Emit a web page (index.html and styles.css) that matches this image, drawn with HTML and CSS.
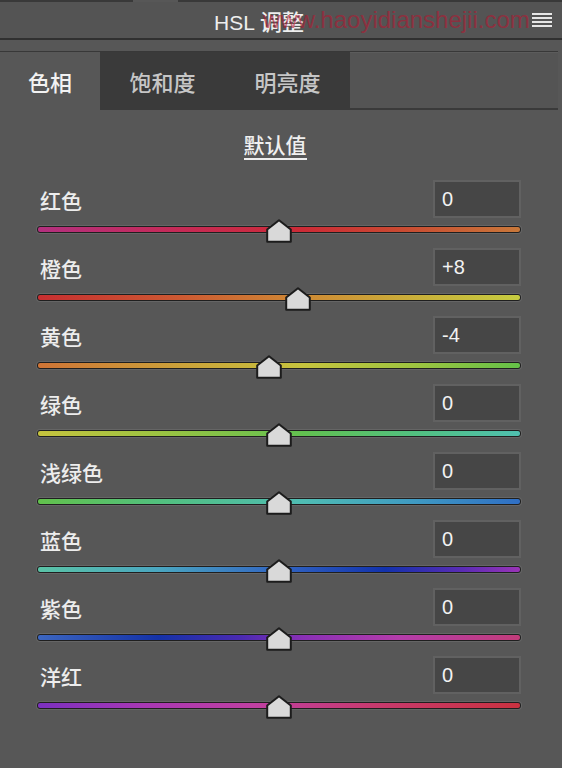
FILE: index.html
```html
<!DOCTYPE html>
<html lang="zh">
<head>
<meta charset="utf-8">
<title>HSL 调整</title>
<link rel="stylesheet" href="styles.css">
</head>
<body>
<div class="panel">
  <div class="topstrip"><span class="seg-a"></span><span class="seg-gap"></span><span class="seg-b"></span></div>
  <div class="header">
    <span class="title">HSL <span class="title-cjk">调整</span></span>
    <span class="watermark">www.haoyidianshejii.com</span>
    <svg class="menu-icon" width="20" height="15" viewBox="0 0 20 15">
      <rect x="0" y="0" width="20" height="2" fill="#e6e6e6"/>
      <rect x="0" y="4" width="20" height="2" fill="#e6e6e6"/>
      <rect x="0" y="8" width="20" height="2" fill="#e6e6e6"/>
      <rect x="0" y="12" width="20" height="2" fill="#e6e6e6"/>
    </svg>
  </div>
  <div class="divider"></div>
  <div class="tabbar">
    <div class="tab active">色相</div>
    <div class="tab">饱和度</div>
    <div class="tab">明亮度</div>
    <div class="tabfill"></div>
  </div>
  <div class="defaults"><span>默认值</span></div>
  <div class="rows">
    <div class="row">
      <div class="row-top"><span class="label">红色</span><div class="field">0</div></div>
      <div class="slider"><div class="track t-red"></div>
        <svg class="thumb" style="left:50%" width="26" height="24" viewBox="0 0 26 24"><path d="M13 1.2 L24.8 10.5 V22.8 H1.2 V10.5 Z"/></svg></div>
    </div>
    <div class="row">
      <div class="row-top"><span class="label">橙色</span><div class="field">+8</div></div>
      <div class="slider"><div class="track t-orange"></div>
        <svg class="thumb" style="left:54%" width="26" height="24" viewBox="0 0 26 24"><path d="M13 1.2 L24.8 10.5 V22.8 H1.2 V10.5 Z"/></svg></div>
    </div>
    <div class="row">
      <div class="row-top"><span class="label">黄色</span><div class="field">-4</div></div>
      <div class="slider"><div class="track t-yellow"></div>
        <svg class="thumb" style="left:48%" width="26" height="24" viewBox="0 0 26 24"><path d="M13 1.2 L24.8 10.5 V22.8 H1.2 V10.5 Z"/></svg></div>
    </div>
    <div class="row">
      <div class="row-top"><span class="label">绿色</span><div class="field">0</div></div>
      <div class="slider"><div class="track t-green"></div>
        <svg class="thumb" style="left:50%" width="26" height="24" viewBox="0 0 26 24"><path d="M13 1.2 L24.8 10.5 V22.8 H1.2 V10.5 Z"/></svg></div>
    </div>
    <div class="row">
      <div class="row-top"><span class="label">浅绿色</span><div class="field">0</div></div>
      <div class="slider"><div class="track t-aqua"></div>
        <svg class="thumb" style="left:50%" width="26" height="24" viewBox="0 0 26 24"><path d="M13 1.2 L24.8 10.5 V22.8 H1.2 V10.5 Z"/></svg></div>
    </div>
    <div class="row">
      <div class="row-top"><span class="label">蓝色</span><div class="field">0</div></div>
      <div class="slider"><div class="track t-blue"></div>
        <svg class="thumb" style="left:50%" width="26" height="24" viewBox="0 0 26 24"><path d="M13 1.2 L24.8 10.5 V22.8 H1.2 V10.5 Z"/></svg></div>
    </div>
    <div class="row">
      <div class="row-top"><span class="label">紫色</span><div class="field">0</div></div>
      <div class="slider"><div class="track t-purple"></div>
        <svg class="thumb" style="left:50%" width="26" height="24" viewBox="0 0 26 24"><path d="M13 1.2 L24.8 10.5 V22.8 H1.2 V10.5 Z"/></svg></div>
    </div>
    <div class="row">
      <div class="row-top"><span class="label">洋红</span><div class="field">0</div></div>
      <div class="slider"><div class="track t-magenta"></div>
        <svg class="thumb" style="left:50%" width="26" height="24" viewBox="0 0 26 24"><path d="M13 1.2 L24.8 10.5 V22.8 H1.2 V10.5 Z"/></svg></div>
    </div>
  </div>
</div>
</body>
</html>
```
FILE: styles.css
```css
html, body {
  margin: 0;
  padding: 0;
  background: #575757;
}
body {
  width: 562px;
  height: 768px;
  overflow: hidden;
  font-family: "Liberation Sans", "Noto Sans CJK SC", sans-serif;
  color: #ececec;
}
.panel {
  width: 562px;
  height: 768px;
  background: #575757;
  position: relative;
}
.topstrip {
  display: flex;
  height: 2px;
}
.seg-a { width: 133px; background: #393939; }
.seg-gap { width: 45px; }
.seg-b { flex: 1; background: #393939; }

.header {
  position: relative;
  height: 36px;
  background: #545454;
  display: flex;
  align-items: center;
  padding-left: 214px;
  overflow: hidden;
}
.title {
  font-size: 21px;
  color: #eeeeee;
  font-family: "Liberation Sans", "Noto Sans CJK SC", sans-serif;
  line-height: 36px;
  position: relative;
  top: 1px;
  white-space: nowrap;
}
.title-cjk {
  font-family: "Noto Sans CJK SC", sans-serif;
  font-size: 22px;
  font-weight: 500;
}
.watermark {
  position: absolute;
  left: 263px;
  top: 4px;
  font-family: "Liberation Sans", sans-serif;
  font-size: 24px;
  color: rgba(178, 24, 50, 0.6);
  white-space: nowrap;
}
.menu-icon {
  position: absolute;
  right: 10px;
  top: 11px;
}
.divider {
  height: 2px;
  background: #303030;
}
.tabbar {
  margin-top: 11px;
  display: flex;
  height: 58px;
  border-top: 1px solid #383838;
  margin-right: 4px;
}
.tab {
  width: 125px;
  background: #3a3a3a;
  color: #c6c6c6;
  font-family: "Noto Sans CJK SC", sans-serif;
  font-size: 22px;
  font-weight: 500;
  display: flex;
  align-items: center;
  justify-content: center;
}
.tab.active {
  width: 100px;
  background: #575757;
  color: #f2f2f2;
}
.tabfill {
  flex: 1;
  background: #545454;
  border-top: 1px solid #5c5c5c;
  border-bottom: 2px solid #3a3a3a;
}
.defaults {
  height: 70px;
  display: flex;
  justify-content: center;
}
.defaults span {
  font-family: "Noto Sans CJK SC", sans-serif;
  font-size: 21px;
  font-weight: 500;
  line-height: 28px;
  margin-top: 20px;
  height: 30px;
  color: #f0f0f0;
  border-bottom: 2px solid #eeeeee;
  box-sizing: border-box;
  position: relative;
  left: -6px;
}
.rows {
  padding-left: 37px;
  width: 484px;
}
.row {
  height: 68px;
}
.row-top {
  height: 38px;
  display: flex;
  align-items: center;
  justify-content: space-between;
}
.label {
  margin-left: 3px;
  font-family: "Noto Sans CJK SC", sans-serif;
  font-size: 21px;
  font-weight: 500;
  color: #ededed;
  position: relative;
  top: 1px;
}
.field {
  width: 88px;
  height: 38px;
  box-sizing: border-box;
  border: 2px solid #616161;
  background: #464646;
  font-family: "Liberation Sans", sans-serif;
  font-size: 20px;
  line-height: 34px;
  padding-left: 7px;
  color: #f2f2f2;
}
.slider {
  position: relative;
  height: 30px;
}
.track {
  position: absolute;
  left: 0;
  right: 0;
  top: 8px;
  height: 5px;
  border: 1px solid #1f1f1f;
  border-radius: 3px;
  box-shadow: 0 0 0 1px rgba(110, 110, 110, 0.6);
}
.thumb {
  position: absolute;
  top: 1px;
  transform: translateX(-50%);
}
.thumb path {
  fill: #d9d9d9;
  stroke: #1c1c1c;
  stroke-width: 2;
  stroke-linejoin: round;
}
.t-red { background: linear-gradient(90deg, #b3307f 0%, #c62a55 30%, #cc2b36 55%, #c94a32 75%, #c8783a 100%); }
.t-orange { background: linear-gradient(90deg, #c72e30 0%, #cd5a32 30%, #cf8a34 55%, #c9b23a 80%, #c6cc40 100%); }
.t-yellow { background: linear-gradient(90deg, #cf7436 0%, #cba23a 30%, #c6c43e 55%, #9ec440 78%, #64c148 100%); }
.t-green { background: linear-gradient(90deg, #c6c33e 0%, #9cc342 25%, #62c150 55%, #52c080 78%, #4fc0b0 100%); }
.t-aqua { background: linear-gradient(90deg, #62c14c 0%, #52c07e 25%, #4fbcb3 55%, #3f9ac2 78%, #2f6ec4 100%); }
.t-blue { background: linear-gradient(90deg, #5ac3a6 0%, #4aa6c0 25%, #3266c2 50%, #1232ac 72%, #5a2cb4 88%, #9a34b6 100%); }
.t-purple { background: linear-gradient(90deg, #3c66c0 0%, #1432a8 25%, #4a2ab2 42%, #8a30b6 55%, #b43caa 75%, #c23c7a 100%); }
.t-magenta { background: linear-gradient(90deg, #7c30c0 0%, #a838b4 22%, #c040a2 45%, #c83a6e 70%, #c93240 100%); }
```
